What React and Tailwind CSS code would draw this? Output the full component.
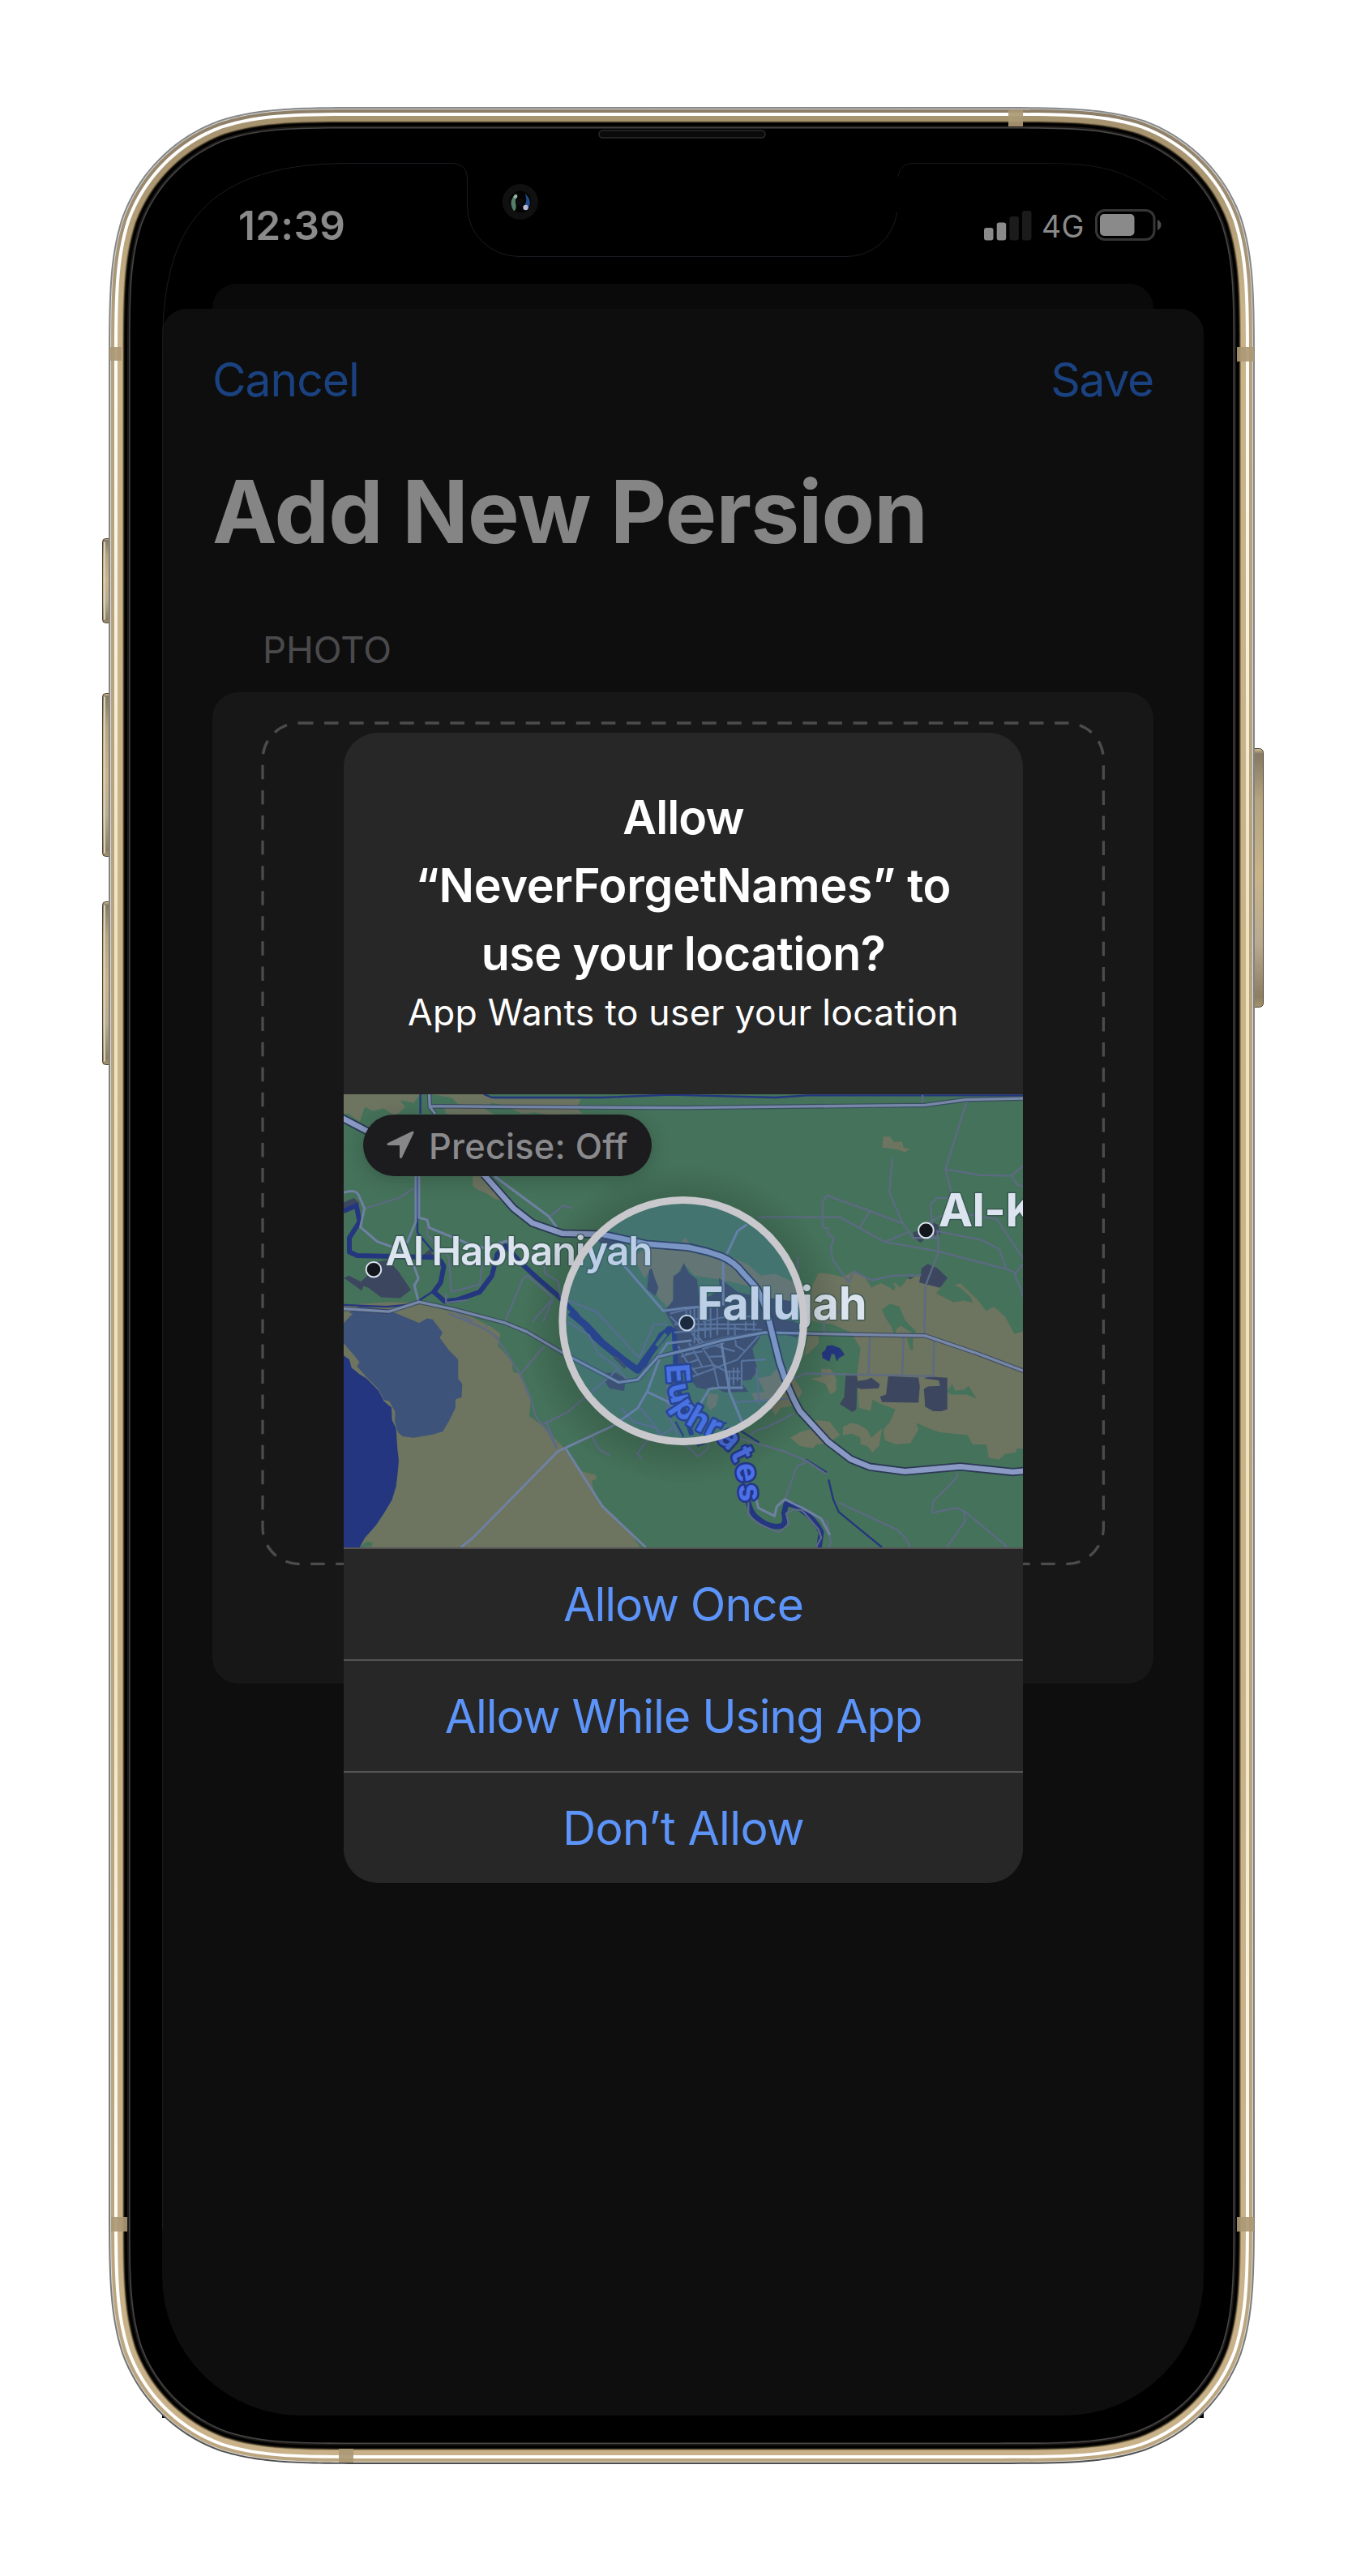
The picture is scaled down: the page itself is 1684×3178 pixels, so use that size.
import React from "react";

/* Rounded rectangle with continuous (iOS style) corners. */
function squircle(x, y, w, h, r) {
  const a = 1.52866498 * r, b = 1.08849296 * r, c = 0.86840694 * r;
  const d = 0.63149379 * r, e = 0.07491139 * r, f = 0.37282383 * r, g = 0.16905956 * r;
  const X = x + w, Y = y + h;
  return [
    `M${x + a},${y}L${X - a},${y}`,
    `C${X - b},${y} ${X - c},${y} ${X - d},${y + e}`,
    `C${X - f},${y + g} ${X - g},${y + f} ${X - e},${y + d}`,
    `C${X},${y + c} ${X},${y + b} ${X},${y + a}`,
    `L${X},${Y - a}`,
    `C${X},${Y - b} ${X},${Y - c} ${X - e},${Y - d}`,
    `C${X - g},${Y - f} ${X - f},${Y - g} ${X - d},${Y - e}`,
    `C${X - c},${Y} ${X - b},${Y} ${X - a},${Y}`,
    `L${x + a},${Y}`,
    `C${x + b},${Y} ${x + c},${Y} ${x + d},${Y - e}`,
    `C${x + f},${Y - g} ${x + g},${Y - f} ${x + e},${Y - d}`,
    `C${x},${Y - c} ${x},${Y - b} ${x},${Y - a}`,
    `L${x},${y + a}`,
    `C${x},${y + b} ${x},${y + c} ${x + e},${y + d}`,
    `C${x + g},${y + f} ${x + f},${y + g} ${x + d},${y + e}`,
    `C${x + c},${y} ${x + b},${y} ${x + a},${y}Z`,
  ].join("");
}

const shell = [
  [0, "url(#edge)"],
  [2, "#d9d9d6"],
  [3, "url(#tan)"],
  [7, "url(#shine)"],
  [11, "url(#gold)"],
  [17, "#9c8860"],
  [18, "#4d432f"],
  [19, "#15110b"],
  [20, "#000000"],
  [23, "#1c1815"],
  [25, "#464646"],
  [26.6, "#000000"],
];

const bands = [
  [1244, 136, 18, 20],
  [135, 428, 15, 17],
  [1526, 428, 21, 18],
  [137, 2735, 20, 18],
  [1526, 2735, 21, 18],
  [418, 3021, 18, 17],
];

function Device() {
  return (
    <svg className="absolute inset-0" width="1684" height="3178" viewBox="0 0 1684 3178" aria-hidden="true">
      <defs>
        <linearGradient id="edge" x1="0" y1="0" x2="0" y2="1">
          <stop offset="0" stopColor="#85878a" />
          <stop offset="0.95" stopColor="#7b7b7b" />
          <stop offset="1" stopColor="#4c4c4c" />
        </linearGradient>
        <linearGradient id="tan" x1="0" y1="0" x2="0" y2="1">
          <stop offset="0" stopColor="#8d7e67" />
          <stop offset="0.1" stopColor="#b6a27e" />
          <stop offset="1" stopColor="#bca67f" />
        </linearGradient>
        <linearGradient id="shine" x1="0" y1="0" x2="0" y2="1">
          <stop offset="0" stopColor="#ffffff" />
          <stop offset="0.08" stopColor="#ffffff" />
          <stop offset="0.35" stopColor="#efe4c0" />
          <stop offset="0.65" stopColor="#efe4c0" />
          <stop offset="0.93" stopColor="#ffffff" />
        </linearGradient>
        <linearGradient id="gold" x1="0" y1="0" x2="0" y2="1">
          <stop offset="0" stopColor="#a6936f" />
          <stop offset="0.03" stopColor="#ab9772" />
          <stop offset="0.08" stopColor="#c9b388" />
          <stop offset="1" stopColor="#c9b289" />
        </linearGradient>
        <linearGradient id="key" x1="0" y1="0" x2="0" y2="1">
          <stop offset="0" stopColor="#d8c79a" />
          <stop offset="0.02" stopColor="#857963" />
          <stop offset="0.2" stopColor="#b5a47f" />
          <stop offset="0.5" stopColor="#cbb588" />
          <stop offset="0.75" stopColor="#b9ab90" />
          <stop offset="0.96" stopColor="#8c7e62" />
          <stop offset="1" stopColor="#a5946c" />
        </linearGradient>
      </defs>

      {[[664.5, 104], [855.5, 201], [1112.5, 201]].map(([y, h]) => (
        <g key={y}>
          <rect x="126.5" y={y} width="16" height={h} rx="4" fill="url(#key)" stroke="#4a4130" />
          <rect x="128" y={y + 4} width="2" height={h - 8} fill="#d8d0bb" />
        </g>
      ))}
      <rect x="1540" y="923.5" width="18.5" height="319" rx="5" fill="url(#key)" stroke="#4a4130" />

      <rect x="200" y="2970" width="1285" height="13" fill="#000000" />
      {shell.map(([i, fill]) => (
        <path key={i} d={squircle(134 + i, 132 + i, 1414 - 2 * i, 2908 - 2 * i, 216 - i)} fill={fill} />
      ))}
      {bands.map(([x, y, w, h]) => (
        <rect key={`${x}-${y}`} x={x} y={y} width={w} height={h} fill="#ab9874" opacity="0.92" />
      ))}
      <rect x="739" y="161" width="205" height="9" rx="4.5" fill="#0a0a0a" stroke="#2b2b2b" strokeWidth="1.5" />
    </svg>
  );
}

/* Hairline of the display glass and the notch with its camera. */
function Glass() {
  return (
    <svg className="absolute inset-0" width="1285" height="2779" viewBox="200 201 1285 2779" fill="none" aria-hidden="true">
      <path
        d="M200.5,2750V430C200.5,300 235,201.500 430,201.500H557Q576.500,201.500 576.500,222V254A64,62 0 0 0 640,316.500H1044A62,62 0 0 0 1106.500,262"
        stroke="#191c22"
      />
      <path d="M1108,218Q1110,201.500 1126,201.500H1290C1370,201.500 1395,215 1440,247" stroke="#14171c" />
      <circle cx="641.8" cy="249" r="22" fill="#101011" />
      <circle cx="641.8" cy="249" r="13.500" fill="#040404" />
      <path d="M636,239.500Q626,249 634,260.500Q638,258 636,250Q635.500,244 638.500,240Z" fill="#557d69" />
      <path d="M647.500,238.500Q658,248 651,258Q646,258 648,252Q651,246 647.500,238.500Z" fill="#1d4f8f" />
      <circle cx="636" cy="242.500" r="2.300" fill="#9ab5a7" />
      <circle cx="648.500" cy="256" r="3.200" fill="#b9b9d3" />
      <circle cx="641.8" cy="249.500" r="4.500" fill="#0b0b0c" />
    </svg>
  );
}

function Signal() {
  return (
    <svg className="mt-[2px]" width="59" height="37" viewBox="0 0 59 37" aria-hidden="true">
      <rect x="0" y="21" width="11.500" height="15.500" rx="3" fill="#8a8a8a" />
      <rect x="15.700" y="14.500" width="11.500" height="22" rx="3" fill="#8a8a8a" />
      <rect x="31.400" y="7" width="11.500" height="29.500" rx="3" fill="#1b1b1b" />
      <rect x="47" y="0" width="11.500" height="36.500" rx="3" fill="#1b1b1b" />
    </svg>
  );
}

function Battery() {
  return (
    <svg width="82" height="39" viewBox="0 0 82 39" aria-hidden="true">
      <rect x="1.500" y="1.500" width="71.500" height="36" rx="10.500" fill="none" stroke="#363636" strokeWidth="3" />
      <rect x="6" y="6" width="42.500" height="27" rx="5" fill="#8a8a8a" />
      <path d="M77,13Q81.500,15.500 81.500,19.500T77,26Z" fill="#4a4a4a" />
    </svg>
  );
}

function StatusBar() {
  return (
    <div className="flex h-[149px] items-start justify-between pr-[52px] pl-[94px] text-[#8a8a8a]">
      <span className="mt-[47px] text-[49.5px] leading-[60px] font-semibold tracking-[0.3px]">12:39</span>
      <div className="mt-[57px] flex items-start">
        <Signal />
        <span className="mt-[2px] ml-[12px] w-[66px] text-[37.5px] leading-[39px] tracking-[0.4px]">4G</span>
        <Battery />
      </div>
    </div>
  );
}

/* ------------------------------ Map ------------------------------ */

const NE = "translate(1290 0)";
const SW = "translate(0 840)";
const SE = "translate(1290 840)";
const MID = "translate(810 390)";

const poly = (list) => list.map((p) => `M${p}Z`).join("");

const tanNW = poly([
  "41,28 325,28 300,60 250,50 270,75 230,110 190,80 150,90 120,75 100,130 60,100 41,100",
  "365,28 560,28 600,45 920,45 905,80 925,100 800,103 745,95 700,100 640,70 590,60 560,80 600,103 490,103 440,103 420,100 410,70 470,70 440,40",
  "520,332 565,332 635,425 600,415 570,395 535,380 518,365",
]);
const tanSW = poly([
  "41,-30 100,-35 200,-42 320,-40 420,-12 490,0 560,35 590,50 622,75 612,120 640,150 665,180 668,215 695,225 715,260 735,310 728,380 790,425 820,460 850,490 880,535 925,585 975,597 978,612 960,620 965,650 1000,720 1040,745 1100,810 1140,866 41,866",
]);
const tanNE = poly([
  "490,730 510,690 545,692 600,705 640,683 680,700 705,745 740,727 775,745 790,755 795,740 785,730 795,727 812,745 840,710 890,700 940,735 965,742 945,765 985,785 1010,798 1048,792 1080,800 1075,780 1035,745 1012,735 1035,728 1100,790 1130,830 1160,815 1200,850 1235,915 1275,905 1275,1340 1245,1340 1240,1355 1200,1360 1180,1380 1140,1375 1132,1325 1080,1325 1062,1290 1010,1285 960,1280 930,1270 872,1245 880,1270 850,1320 800,1325 755,1310 750,1270 775,1240 795,1195 740,1175 710,1158 703,1200 660,1190 652,1070 665,970 630,910 560,880 500,870 460,860",
  "750,185 775,185 790,205 820,203 825,225 848,230 830,243 800,232 745,225",
]);
const tanSE = poly([
  "405,460 440,440 490,425 500,395 550,400 590,450 545,480 500,485 490,500 440,490",
  "600,450 600,420 630,405 655,410 690,430 705,460 745,425 735,490 710,515 690,490 665,485 665,460 635,445",
  "520,205 555,205 575,240 575,285 555,300 535,260 480,240 520,235",
]);
const tanMid = poly([
  "300,235 355,210 480,190 495,168 520,200 600,218 680,245 730,270 775,310 830,303 890,330 935,350 940,420 860,400 770,390 740,350 650,330 600,320 530,310 490,265 450,330 450,412 430,425 390,385 395,350 370,285 345,320",
  "765,690 810,680 850,640 880,635 900,690 930,740 900,790 850,800 830,830 800,770 760,780 740,745 790,740",
  "580,745 620,750 612,790 590,808 575,790",
  "870,610 885,560 930,535 990,525 990,560 950,600 920,605",
]);
const greenNE = poly([
  "745,825 775,803 810,815 830,865 870,905 865,918 815,885 800,895 790,920 780,890 755,850",
  "985,1130 1005,1100 1015,1125 1050,1122 1065,1108 1095,1155 1060,1140 1000,1140",
  "838,933 860,930 860,975 850,975",
  "330,850 480,860 470,930 440,1080 340,1010",
]);

const lake = poly([
  "41,35 75,0 60,-2 100,-28 200,-15 250,5 320,35 350,18 370,22 388,45 407,70 397,90 430,135 465,170 465,240 480,262 478,310 455,318 455,350 430,400 408,437 370,448 300,460 260,455 242,440 230,400 232,365 210,325 190,320 170,280 130,240 90,195 100,180 80,155 41,110",
]);
const deepLake = poly([
  "41,155 62,170 70,200 100,225 125,240 170,285 190,325 218,348 220,395 235,425 240,500 245,545 240,600 235,640 220,690 205,715 190,740 160,785 120,830 100,866 41,866",
]);

const urbanNW = poly([
  "128,700 165,650 205,640 242,682 290,752 250,783 180,780 132,745 115,738 108,755 41,708 60,700 105,722",
  "41,428 80,412 100,432 60,460 41,468",
  "325,632 360,602 382,640",
]);
const urbanNE = poly([
  "860,540 900,525 925,500 950,510 962,545 905,562 888,578 865,560",
  "883,725 892,672 915,656 950,672 988,708 960,745",
  "838,706 862,706 850,714",
]);
const urbanSE = poly([
  "610,230 652,230 655,250 690,245 705,237 737,262 732,277 670,280 652,275 650,355 635,365 588,335 605,310",
  "768,232 880,237 885,270 880,330 745,328 738,308 760,300",
  "900,240 920,233 987,238 987,355 965,362 935,362 905,345 900,280 915,270 960,268 955,248",
]);
const urbanMid = poly([
  "420,440 452,400 452,312 478,295 490,263 510,300 540,325 548,400 590,385 625,360 620,318 650,340 690,370 730,380 930,410 900,430 860,470 900,480 925,490 910,540 840,520 780,525 760,560 745,580 755,625 765,660 740,695 700,700 730,740 640,742 600,720 570,730 540,725 510,690 475,655 460,600 465,520",
  "355,360 362,290 372,282 385,325 397,355 385,385",
  "198,700 212,685 205,670 240,670 275,690 270,737 215,727",
  "168,172 250,178 225,215 190,200",
]);

const bigRoad =
  "M30,113L135,168L350,290M560,325L670,450L740,505L850,543L1000,547L1160,582L1320,595L1385,610L1440,628Q1490,650 1520,690L1570,745Q1600,800 1615,860L1655,1020Q1690,1130 1730,1200L1835,1315L1920,1380L1990,1408L2120,1425L2325,1407L2520,1427L2570,1422";
const midRoads = [
  "M358,28L360,75L380,100M360,72L700,75L1300,78L2195,68L2345,48L2570,43",
  "M41,822L208,833L320,797L440,822L640,875L720,908L860,990L1060,1095L1130,1085L1205,1000L1330,970L1440,940L1600,910L1900,917L2195,922L2380,985L2560,1053",
];
const roads = [
  "M308,332V500L275,580M320,332V485L350,493L358,522L500,580L560,597L650,570",
  "M41,392Q90,375 100,410L118,450L103,520L165,573L240,600L300,660L318,710L303,735L318,797",
  "M600,332L800,480L830,520M1060,640L1225,830L1300,820L1430,810",
  "M475,1706L520,1670L835,1350L1040,1255L1130,1190L1165,1130L1210,1010M862,1338L1000,1555L1090,1640L1160,1706",
  "M1165,1130L1240,1165L1265,1190M1205,1000L1240,950L1330,940",
  "M1564,1505L1577,1560L1637,1590L1645,1555L1675,1528L1740,1560L1810,1600L1842,1660",
  "M1440,950L1470,1130L1520,1250M1350,1195L1395,1120L1430,1115H1520",
  "M1460,620L1500,535L1535,510M1447,640V810",
];
const lanes = [
  "M118,452L250,410L302,375M800,485L855,440L888,450M350,515V550L430,630L440,760L545,732L555,650M420,765V800L500,790M785,650V690L835,720L845,780L980,835L1010,870",
  "M430,820L520,870M640,868L705,710L722,700L815,780M780,870L815,785L740,870",
  "M430,840L560,895L605,925L695,1065L735,1160L755,1225L800,1280L830,1340M695,1065L785,960M570,880V890M780,1250L870,1205L1020,1080L1060,1040M790,1237L830,1335M960,1298L990,1345L1025,1365M1165,1310L1128,1358L1145,1378M870,870L950,920L985,990L1050,1035L1085,1080M985,840L1135,1005L1190,880L1240,880",
  "M1575,483H1878L2045,575L2235,608L2495,675L2530,690L2560,655M1815,520V425L1830,403L1990,460L2105,505M1990,460L1950,525M1815,520L1835,525L1835,545L1858,563L1845,595L1852,640L1912,725L1930,683L1998,717L2070,700L2180,698M2073,265L2062,390L2108,500L2150,560H2240M2350,50L2270,305L2400,328L2515,330L2560,290M2270,305L2295,400L2325,480M2045,575L2130,540M2225,560L2215,435L2240,412H2290M2200,510L2250,480L2330,470L2460,490L2560,640M2240,535L2405,568L2470,602L2495,675M2240,530L2245,610L2195,740L2192,920M2525,690L2560,780M2185,30V68M2515,330L2535,362L2560,370M1722,630L1725,680",
  "M1885,830L1820,860V910M1990,922L1985,1065M2115,922L2110,1065M2228,930L2225,1075M1690,1090L1750,1062L2225,1072M1550,1290Q1560,1270 1600,1265L1710,1210M1500,1300L1670,1350L1755,1385L1830,1435M1755,1390L1720,1405L1675,1530M1540,1510V1580Q1560,1620 1655,1650L1690,1620L1680,1580L1710,1565L1740,1570L1800,1640L1810,1670L1790,1706M1830,1600L1845,1690L1840,1706",
  "M1875,1540L2090,1640L2125,1675L2140,1706M2315,1430L2310,1450L2225,1535L2220,1578L2310,1560L2340,1572L2410,1630L2500,1706M2340,1572L2342,1610L2275,1706M1580,1180L1570,1040M1480,1170L1690,1155M1300,1320L1355,1370L1390,1340L1395,1320M1070,1190L1115,1240L1200,1265L1215,1290L1260,1265M1140,1190L1200,1265M1240,1100V1210L1280,1290",
];
const streets =
  "M440,450L540,425M455,490H760M455,520L620,505L780,510M470,590L560,560L640,540L780,518M480,610L530,595M490,640L545,620M500,660L600,640M505,690L600,655L690,620L775,525M500,425V490M515,425V490M530,425V560M545,425V560M570,430V540M590,430V540M615,430V530M655,470V530M680,490V530M720,480V515M750,470V515M480,470L550,560L600,640L620,725M580,610L640,608V640M610,570L680,590M680,540L685,570L720,590M705,625V725M620,725H705M660,660V720M675,650V715M690,650V700M650,690H705M640,665H700M470,570L500,625L545,680M510,560L540,610L560,650M560,580L640,560M440,460L480,500L520,480M540,505H700M560,480L630,465L760,460M540,530L580,580M495,600L560,590M600,640L640,660M515,470H560M705,625L795,620";

const water =
  "M41,460L88,440L100,500L62,560V612L90,625L380,632L400,645L412,665L400,725L375,760L415,795L460,790L545,760L590,700L610,620L640,590L700,655L760,710L830,770L900,840L960,920L1000,955L1070,1010L1125,1050L1155,1030L1190,965L1215,920L1250,895L1265,905L1270,1000V1080L1300,1190L1330,1290";
const canals =
  "M325,28V100M314,335V540L372,610M41,808L200,815L300,805L372,758M560,28L590,40H1000L1250,30L1640,40L1760,32H2570";

function MapLabel({ x, y, size, weight, spacing, children }) {
  return (
    <text
      x={x}
      y={y}
      fontSize={size}
      fontWeight={weight}
      letterSpacing={spacing}
      fill="#dce4ef"
      stroke="#33524f"
      strokeWidth="9"
      strokeOpacity="0.75"
      strokeLinejoin="round"
      paintOrder="stroke"
    >
      {children}
    </text>
  );
}

function MapArt() {
  return (
    <svg
      className="block h-full w-full"
      viewBox="41 28 2516 1678"
      preserveAspectRatio="none"
      fill="none"
      strokeLinejoin="round"
      fontFamily="Inter, sans-serif"
      role="img"
      aria-label="Map of Fallujah"
    >
      <defs>
        <path id="river-text" d="M1236,1030C1240,1110 1250,1185 1290,1230C1340,1280 1400,1285 1450,1333C1495,1380 1500,1420 1512,1560" />
        <radialGradient id="halo" gradientUnits="userSpaceOnUse" cx="1298" cy="880" r="590">
          <stop offset="0.76" stopColor="#16261e" stopOpacity="0.2" />
          <stop offset="1" stopColor="#16261e" stopOpacity="0" />
        </radialGradient>
        <mask id="outside">
          <rect x="41" y="28" width="2516" height="1678" fill="#ffffff" />
          <circle cx="1298" cy="867" r="447" fill="#000000" />
        </mask>
      </defs>
      <rect x="41" y="28" width="2516" height="1678" fill="#45725a" />
      <g fill="#6d7460">
        <path d={tanNW} />
        <path d={tanSW} transform={SW} />
        <path d={tanNE} transform={NE} />
        <path d={tanSE} transform={SE} />
        <path d={tanMid} transform={MID} />
      </g>
      <path d={greenNE} transform={NE} fill="#45725a" />
      <path d="M100,866L125,845L148,848L145,862Z" transform={SW} fill="#45725a" />
      <path d={lake} transform={SW} fill="#3d5379" />
      <path d={deepLake} transform={SW} fill="#24367f" />
      <g fill="#3c475f">
        <path d={urbanNW} />
        <path d={urbanNE} transform={NE} />
        <path d={urbanSE} transform={SE} />
        <path d={urbanMid} transform={MID} />
      </g>
      <path d={canals} stroke="#24367f" strokeWidth="7" />
      <path d={water} stroke="#24367f" strokeWidth="18" />
      <path d="M880,835L940,885L1000,950L1075,1010L1130,1050L1195,960L1250,895" stroke="#24367f" strokeWidth="26" />
      <path d="M1045,1000L1085,1040" stroke="#3c475f" strokeWidth="12" />
      <path d="M1200,960L1235,915" stroke="#45725a" strokeWidth="14" />
      <g transform={SE} stroke="#24367f">
        <path d="M245,665Q250,730 280,755Q330,800 378,785Q390,770 382,740L390,705Q420,705 440,722Q500,765 520,810L512,866" strokeWidth="20" />
        <path d="M462,540L540,588M547,615L565,690L585,735L745,866M-20,400L10,455M215,430L290,478M90,480L60,490M110,420L170,405" strokeWidth="7" />
      </g>
      <path d="M1815,1005L1812,985L1825,975L1830,960L1850,957L1880,968L1897,992L1875,1005L1868,1018L1858,990H1848L1840,1018Z" fill="#24367f" />
      {lanes.map((d) => (
        <path key={d} d={d} stroke="#5d6a84" strokeWidth="7" />
      ))}
      <path d={streets} transform={MID} stroke="#5f7193" strokeWidth="6.500" />
      {roads.map((d) => (
        <path key={d} d={d} stroke="#6f81a3" strokeWidth="9" />
      ))}
      {midRoads.map((d) => (
        <g key={d}>
          <path d={d} stroke="#34435f" strokeWidth="17" strokeOpacity="0.75" />
          <path d={d} stroke="#7687a8" strokeWidth="10" />
        </g>
      ))}
      <path d={bigRoad} stroke="#2b3954" strokeWidth="31" />
      <path d={bigRoad} stroke="#8a9ac4" strokeWidth="20" />

      <text fontSize="118" fontWeight="700" fill="#4c70e8" stroke="#24378a" strokeWidth="16" strokeLinejoin="round" paintOrder="stroke">
        <textPath href="#river-text" textLength="622" lengthAdjust="spacing">
          Euphrates
        </textPath>
      </text>
      <g fill="#14161d" stroke="#dce4ef" strokeWidth="6">
        <circle cx="152" cy="677" r="28" />
        <circle cx="2198" cy="532" r="28" />
        <circle cx="1312" cy="875" r="28" />
      </g>
      <MapLabel x="196" y="662" size="148" weight="600" spacing="-4.200">Al Habbaniyah</MapLabel>
      <MapLabel x="1349" y="863" size="168" weight="700" spacing="-0.900">Fallujah</MapLabel>
      <MapLabel x="2244" y="518" size="171" weight="700" spacing="-2">Al-K</MapLabel>

      <circle cx="1298" cy="880" r="590" fill="url(#halo)" mask="url(#outside)" />
      <circle cx="1298" cy="867" r="447" fill="#3a7cc8" fillOpacity="0.2" />
      <circle cx="1298" cy="867" r="447" stroke="#c9c8cc" strokeWidth="27" />
    </svg>
  );
}

function PrecisePill() {
  return (
    <div className="absolute top-[25px] left-[24px] flex h-[76px] w-[356px] items-center rounded-full bg-[#1c1c1e] pl-[28px] text-[#8a8a8d] shadow-[0_4px_24px_rgba(0,0,0,0.2)]">
      <svg className="mt-[-2px]" width="36" height="36" viewBox="0 0 36 36" aria-hidden="true">
        <path d="M3,17.500L33,3L18.500,33.500V17.500Z" fill="#87878a" stroke="#87878a" strokeWidth="3" strokeLinejoin="round" />
      </svg>
      <span className="mt-[2px] ml-[17px] text-[43.3px] leading-[50px] font-medium tracking-[0.25px] whitespace-nowrap">Precise: Off</span>
    </div>
  );
}

function Action({ className, children }) {
  return (
    <button className={`block h-[138px] w-full border-t-2 border-[#545454] pt-px text-center text-[57px] leading-[136px] text-[#5c94fa] ${className}`}>
      {children}
    </button>
  );
}

function LocationAlert() {
  return (
    <div className="absolute top-[703px] left-[224px] w-[838px] overflow-hidden rounded-[42px] bg-[#272727]">
      <div className="h-[446px] pt-[62px] text-center text-white">
        <h2 className="text-[57.3px] leading-[84px] font-semibold">
          <span className="block tracking-[-0.9px]">Allow</span>
          <span className="block tracking-[-0.2px]">“NeverForgetNames” to</span>
          <span className="block tracking-[-0.5px]">use your location?</span>
        </h2>
        <p className="mt-[4px] text-[44.5px] leading-[54px] tracking-[0.25px]">App Wants to user your location</p>
      </div>
      <div className="relative h-[559px]">
        <MapArt />
        <PrecisePill />
      </div>
      <Action className="tracking-[-1px]">Allow Once</Action>
      <Action className="tracking-[-1px]">Allow While Using App</Action>
      <Action className="tracking-[-0.65px]">Don’t Allow</Action>
    </div>
  );
}

export default function App() {
  return (
    <main className="relative flow-root h-[3178px] w-[1684px] overflow-hidden bg-white font-['Inter',sans-serif]">
      <Device />
      <div className="relative mt-[201px] ml-[200px] h-[2779px] w-[1285px] overflow-hidden rounded-b-[172px]">
        <StatusBar />
        <div className="mx-[62px] h-[31px] rounded-t-[30px] bg-[#0a0a0a]" />
        <section className="h-[2599px] rounded-t-[30px] bg-[#0e0e0e] px-[62px] pt-[53px]">
          <div className="flex justify-between text-[57px] leading-[70px] text-[#1a4281]">
            <button className="tracking-[-1.02px]">Cancel</button>
            <button className="tracking-[-1.29px]">Save</button>
          </div>
          <h1 className="mt-[67px] text-[107px] leading-[120px] font-bold tracking-[-0.85px] whitespace-nowrap text-[#858585]">Add New Persion</h1>
          <h3 className="mt-[84px] pl-[62px] text-[45.5px] leading-[54px] tracking-[0px] text-[#4a4a4d]">PHOTO</h3>
          <div className="mt-[25px] h-[1223px] rounded-[32px] bg-[#171717] pt-[36px] pl-[60px]">
            <svg width="1041" height="1041" viewBox="0 0 1041 1041" fill="none" aria-hidden="true">
              <rect x="2" y="2" width="1037.400" height="1037.400" rx="45" stroke="#4c4c4e" strokeWidth="3.300" strokeDasharray="17.500 13.570" />
            </svg>
          </div>
        </section>
        <Glass />
        <LocationAlert />
      </div>
    </main>
  );
}
